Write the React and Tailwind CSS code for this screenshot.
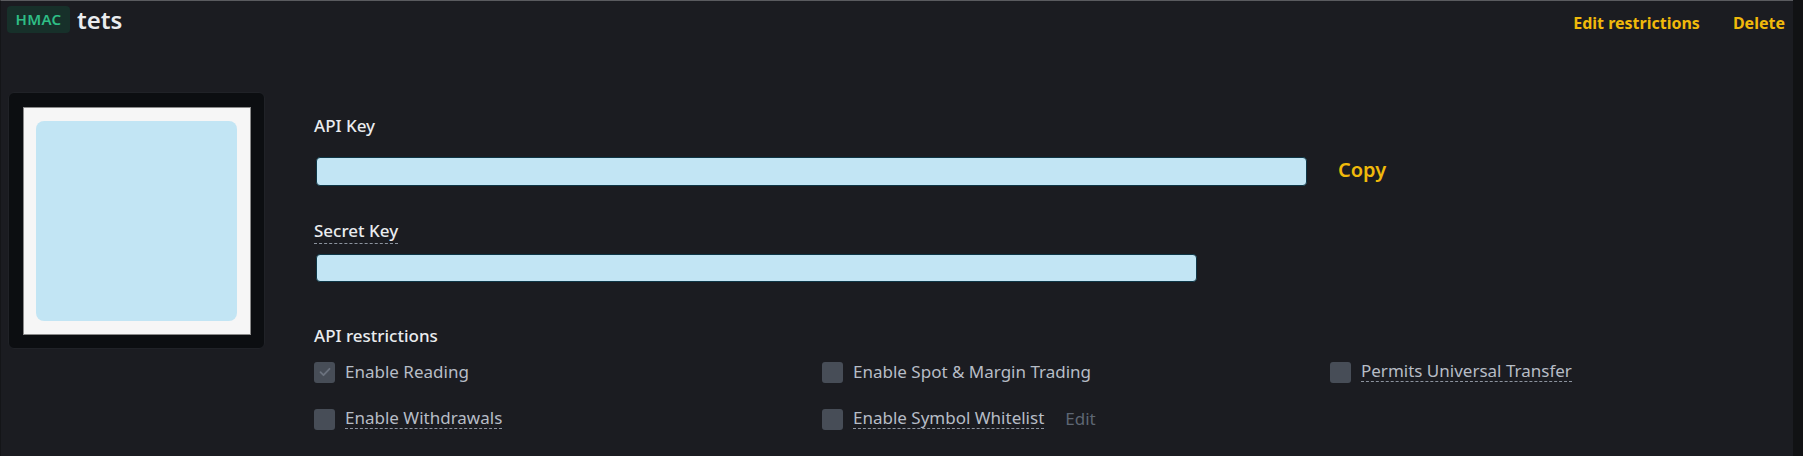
import React from 'react';

const font = { fontFamily: '"Noto Sans", "Open Sans", Arial, sans-serif' };

function Checkbox({ checked }) {
  return (
    <span className="flex h-[21px] w-[21px] shrink-0 items-center justify-center rounded-[3px] bg-[#474d57]">
      {checked && (
        <svg width="14" height="14" viewBox="0 0 14 14" fill="none">
          <path d="M2.5 7.2l3 3 6-6.4" stroke="#6b727e" strokeWidth="1.8" strokeLinecap="round" strokeLinejoin="round" />
        </svg>
      )}
    </span>
  );
}

function Option({ label, checked, dashed, extra }) {
  return (
    <div className="flex h-[24px] items-center">
      <Checkbox checked={checked} />
      <span
        className={`mb-[2px] ml-[10px] text-[17px] leading-[21px] text-[#b7bdc6] ${dashed ? 'border-b border-dashed border-[#8c939e]' : ''}`}
      >
        {label}
      </span>
      {extra && <span className="mb-[2px] ml-[21px] text-[17px] leading-[21px] text-[#5e6673]">{extra}</span>}
    </div>
  );
}

export default function App() {
  return (
    <div className="flex h-[456px] w-full bg-[#111214]" style={font}>
      <div className="h-full w-[1793px] border-t border-l border-[#5a5b5f] border-l-[#141518] bg-[#1b1c21]">
        {/* Header */}
        <div className="flex h-[40px] items-start justify-between pl-[6px] pr-[8px] pt-[5px]">
          <div className="flex items-center">
            <span className="flex h-[27px] w-[63px] items-center justify-center rounded-[4px] bg-[#17302a] text-[15px] font-semibold tracking-wide text-[#2ebd85]">
              HMAC
            </span>
            <span className="ml-[7px] text-[24px] font-semibold leading-[27px] text-[#eaecef]">tets</span>
          </div>
          <div className="flex items-center pt-[5px] text-[16px] font-bold text-[#f0b90b]">
            <span>Edit restrictions</span>
            <span className="ml-[33px]">Delete</span>
          </div>
        </div>

        {/* Body */}
        <div className="mt-[51px] flex pl-[7px]">
          <div className="flex h-[257px] w-[257px] items-center justify-center rounded-[6px] border border-[#202227] bg-[#0c0e11]">
            <div className="flex h-[228px] w-[228px] items-center justify-center border border-[#8a8a8a] bg-[#f6f6f6]">
              <div className="h-[200px] w-[201px] rounded-[8px] bg-[#c2e5f4]" />
            </div>
          </div>

          <div className="ml-[49px] flex flex-col pt-[22px]">
            <div className="h-[24px] text-[17px] font-medium leading-[24px] text-[#eaecef]">API Key</div>
            <div className="mt-[19px] flex h-[29px] items-center">
              <div className="ml-[2px] h-[29px] w-[991px] rounded-[4px] border border-[#0e3646] bg-[#c2e5f4]" />
              <span className="mb-[4px] ml-[31px] text-[20px] font-semibold leading-[20px] text-[#f0b90b]">Copy</span>
            </div>

            <div className="mt-[33px] h-[24px] text-[17px] font-medium leading-[24px] text-[#eaecef]">
              <span className="border-b border-dashed border-[#8c939e] pb-[1px]">Secret Key</span>
            </div>
            <div className="ml-[2px] mt-[11px] h-[28px] w-[881px] rounded-[4px] border border-[#0e3646] bg-[#c2e5f4]" />

            <div className="mt-[42px] h-[24px] text-[17px] font-medium leading-[24px] text-[#eaecef]">API restrictions</div>
            <div className="mt-[12px] grid grid-cols-[508px_508px_400px] gap-y-[23px]">
              <Option label="Enable Reading" checked />
              <Option label="Enable Spot & Margin Trading" />
              <Option label="Permits Universal Transfer" dashed />
              <Option label="Enable Withdrawals" dashed />
              <Option label="Enable Symbol Whitelist" dashed extra="Edit" />
            </div>
          </div>
        </div>
      </div>
    </div>
  );
}
